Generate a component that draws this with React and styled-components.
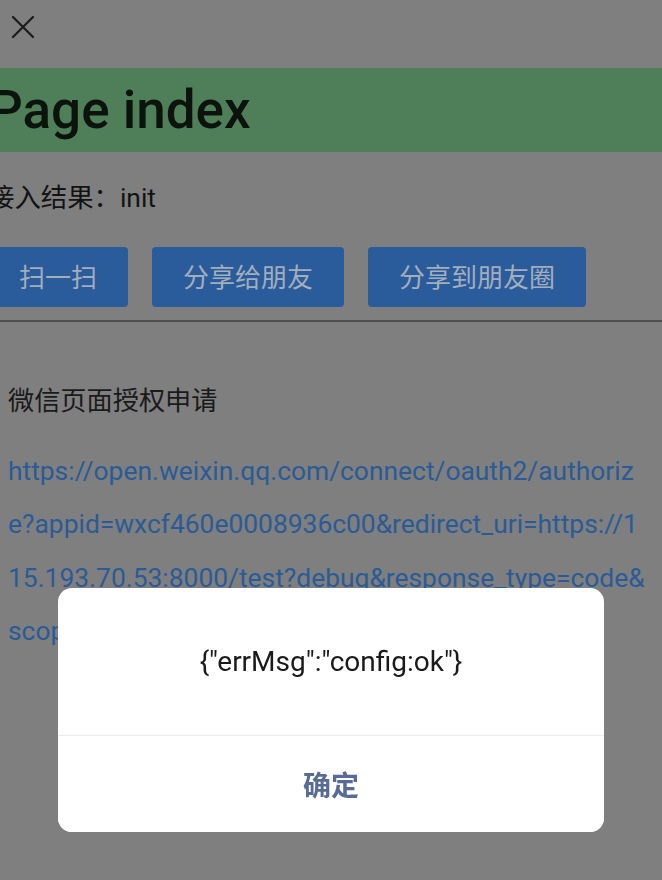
import React from 'react';
import styled, { createGlobalStyle } from 'styled-components';

const GlobalStyle = createGlobalStyle`
  html, body {
    margin: 0;
    padding: 0;
    background: #7f7f7f;
  }
  body {
    font-family: Roboto, "Noto Sans CJK SC", sans-serif;
    overflow: hidden;
  }
`

const Page = styled.div`
  width: 662px;
  min-height: 880px;
  background: #7f7f7f;
  overflow: hidden;
`

const NavBar = styled.div`
  height: 68px;
  display: flex;
  align-items: flex-start;
  padding: 15px 0 0 11px;
  box-sizing: border-box;
`

const CloseButton = styled.button`
  width: 24px;
  height: 24px;
  padding: 0;
  border: 0;
  background: none;
  display: flex;
`

const Banner = styled.h1`
  margin: 0;
  height: 84px;
  line-height: 84px;
  background: #4e7f58;
  color: #0c130d;
  font-size: 53px;
  font-weight: 500;
  text-indent: -11px;
  white-space: nowrap;
`

const TopSection = styled.div`
  margin-left: -12px;
`

const Status = styled.p`
  margin: 27px 0 0;
  font-size: 26.4px;
  line-height: 39px;
  color: #131313;
`

const ButtonRow = styled.div`
  display: flex;
  gap: 24px;
  margin-top: 29px;
`

const ActionButton = styled.button`
  height: 60px;
  padding: 0 31px 3px;
  border: 0;
  border-radius: 4px;
  background: #2a5b9b;
  color: #a3aebd;
  font-family: Roboto, "Noto Sans CJK SC", sans-serif;
  font-size: 26px;
`

const Rule = styled.hr`
  margin: 13px 0 0;
  border: 0;
  height: 2px;
  background: #4f4f4f;
`

const Content = styled.div`
  padding: 0 14px 0 8px;
`

const Title = styled.p`
  margin: 60px 0 0;
  font-size: 26.2px;
  line-height: 39px;
  color: #1a1a1a;
`

const AuthLink = styled.a`
  display: block;
  margin-top: 24px;
  font-size: 26.4px;
  line-height: 53.4px;
  color: #2a5b96;
  text-decoration: none;
  word-break: break-all;
`

const Mask = styled.div`
  position: fixed;
  inset: 0;
  display: flex;
  flex-direction: column;
  align-items: center;
  padding-top: 588px;
  box-sizing: border-box;
`

const Dialog = styled.div`
  width: 546px;
  background: #fff;
  border-radius: 14px;
  overflow: hidden;
`

const DialogBody = styled.div`
  height: 148px;
  display: flex;
  align-items: center;
  justify-content: center;
  font-size: 28px;
  color: #1a1a1a;
  border-bottom: 1px solid #ececec;
  box-sizing: border-box;
`

const DialogButton = styled.button`
  width: 100%;
  height: 96px;
  border: 0;
  background: #fff;
  color: #576b95;
  font-family: Roboto, "Noto Sans CJK SC", sans-serif;
  font-size: 28px;
  font-weight: 700;
`

const CloseIcon = () => (
  <svg width="24" height="24" viewBox="0 0 24 24" fill="none" stroke="#1b1b1b" strokeWidth="2.2" strokeLinecap="round">
    <path d="M2 2 L22 22 M22 2 L2 22" />
  </svg>
);

const authUrl = 'https://open.weixin.qq.com/connect/oauth2/authorize?appid=wxcf460e0008936c00&redirect_uri=https://115.193.70.53:8000/test?debug&response_type=code&scope=snsapi_userinfo#wechat_redirect';

const App = () => {
  return (
    <>
      <GlobalStyle />
      <Page>
        <NavBar>
          <CloseButton><CloseIcon /></CloseButton>
        </NavBar>
        <Banner>Page index</Banner>
        <TopSection>
          <Status>接入结果：init</Status>
          <ButtonRow>
            <ActionButton>扫一扫</ActionButton>
            <ActionButton>分享给朋友</ActionButton>
            <ActionButton>分享到朋友圈</ActionButton>
          </ButtonRow>
        </TopSection>
        <Rule />
        <Content>
          <Title>微信页面授权申请</Title>
          <AuthLink href="#">{authUrl}</AuthLink>
        </Content>
      </Page>
      <Mask>
        <Dialog>
          <DialogBody>{'{"errMsg":"config:ok"}'}</DialogBody>
          <DialogButton>确定</DialogButton>
        </Dialog>
      </Mask>
    </>
  );
};

export default App;
